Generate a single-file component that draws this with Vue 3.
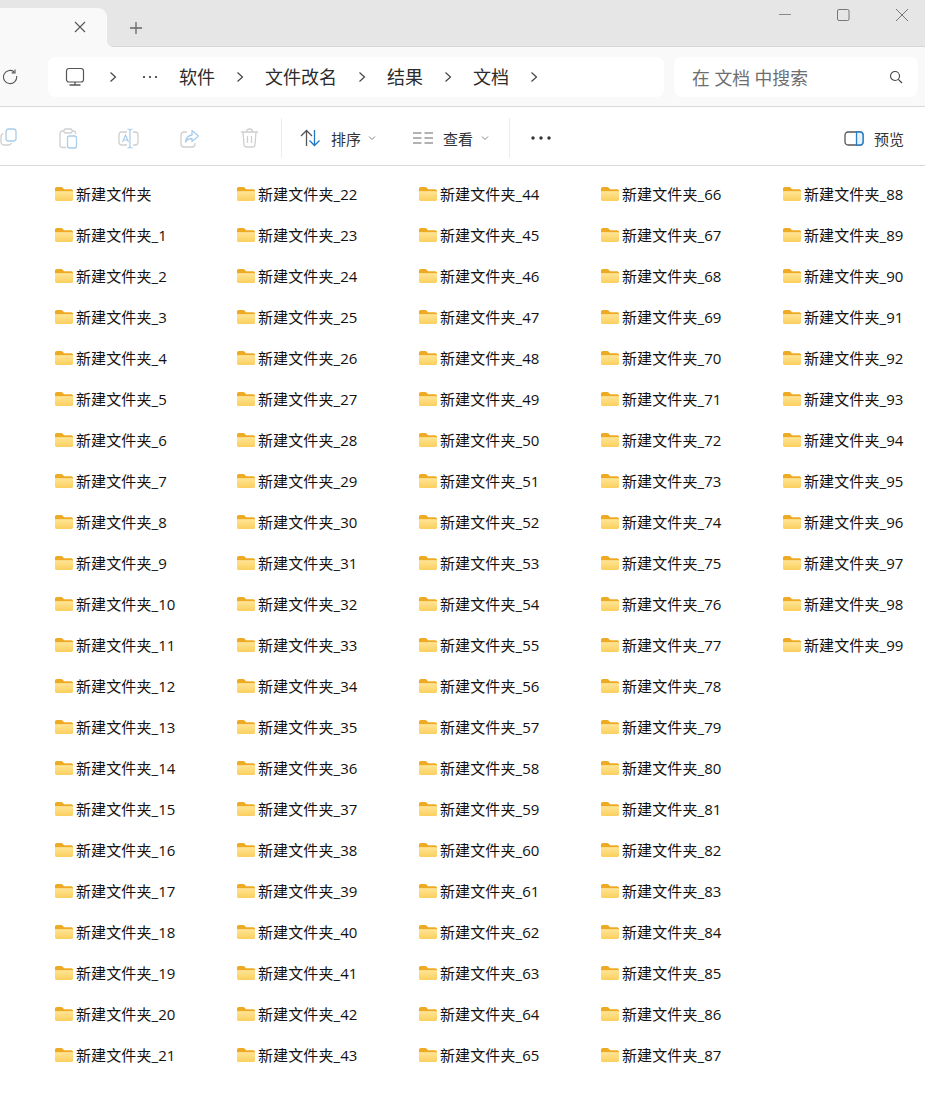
<script setup>
const names = Array.from({ length: 100 }, (_, i) => (i === 0 ? '新建文件夹' : `新建文件夹_${i}`))
const crumbs = ['软件', '文件改名', '结果', '文档']
</script>

<template>
  <div class="window">
    <header class="titlebar">
      <div class="tab">
        <svg class="tab-close" width="14" height="14" viewBox="0 0 14 14"><path d="M2 2l10 10M12 2L2 12" stroke="#555" stroke-width="1.1" fill="none"/></svg>
      </div>
      <svg class="tab-add" width="14" height="14" viewBox="0 0 14 14"><path d="M7 1v12M1 7h12" stroke="#666" stroke-width="1.3" fill="none"/></svg>
      <div class="controls">
        <svg width="14" height="14" viewBox="0 0 14 14"><path d="M0 6.500h12" stroke="#8a8a8a" stroke-width="1" fill="none"/></svg>
        <svg width="14" height="14" viewBox="0 0 14 14"><rect x="0.500" y="1.500" width="11.500" height="11" rx="1.500" stroke="#777" stroke-width="1" fill="none"/></svg>
        <svg width="14" height="14" viewBox="0 0 14 14"><path d="M1 1l12 12M13 1L1 13" stroke="#777" stroke-width="1" fill="none"/></svg>
      </div>
    </header>

    <nav class="navbar">
      <svg class="refresh" width="18" height="18" viewBox="0 0 18 18"><path d="M14.600 7.500A6.600 6.600 0 1 1 12 3.200M13 1v3.400H9.700" stroke="#555" stroke-width="1.100" fill="none" transform="translate(-1 0.500)"/></svg>
      <div class="address">
        <svg class="pc" width="20" height="20" viewBox="0 0 20 20"><rect x="1.500" y="1.500" width="17" height="13.500" rx="2.500" stroke="#555" stroke-width="1.200" fill="none"/><path d="M10 15v2.500M4.500 18h11" stroke="#555" stroke-width="1.300" fill="none"/></svg>
        <svg class="chev" width="8" height="12" viewBox="0 0 8 12"><path d="M1.500 1.500L6.500 6l-5 4.500" stroke="#444" stroke-width="1.200" fill="none"/></svg>
        <svg class="dots" width="16" height="4" viewBox="0 0 16 4"><circle cx="2" cy="2" r="1.100" fill="#333"/><circle cx="8" cy="2" r="1.100" fill="#333"/><circle cx="14" cy="2" r="1.100" fill="#333"/></svg>
        <template v-for="c in crumbs" :key="c">
          <span class="crumb">{{ c }}</span>
          <svg class="chev" width="8" height="12" viewBox="0 0 8 12"><path d="M1.500 1.500L6.500 6l-5 4.500" stroke="#444" stroke-width="1.200" fill="none"/></svg>
        </template>
      </div>
      <div class="search">
        <span class="search-text">在 文档 中搜索</span>
        <svg width="14" height="14" viewBox="0 0 14 14"><circle cx="6" cy="6" r="4.500" stroke="#444" stroke-width="1.100" fill="none"/><path d="M9.300 9.300L13 13" stroke="#444" stroke-width="1.200" fill="none"/></svg>
      </div>
    </nav>

    <section class="toolbar">
      <div class="tool-icons">
        <svg width="18" height="20" viewBox="0 0 18 20"><rect x="6" y="1" width="10" height="12" rx="2.500" stroke="#a9cdea" stroke-width="1.300" fill="none"/><path d="M3.500 5.500C1.800 6 1 7 1 8.500v5C1 16 2.500 17 4.500 17h4c1.500 0 2.500-.8 3-2" stroke="#cfcfcf" stroke-width="1.300" fill="none"/></svg>
        <svg width="19" height="21" viewBox="0 0 19 21"><path d="M5 3H3.500C2 3 1 4 1 5.500V17c0 1.500 1 2.500 2.500 2.500H7M13 3h1.500C16 3 16.500 4 16.500 5v1" stroke="#cfcfcf" stroke-width="1.300" fill="none"/><rect x="5" y="1" width="8" height="4" rx="1.500" stroke="#cfcfcf" stroke-width="1.300" fill="none"/><rect x="8.500" y="8" width="9" height="12" rx="2" stroke="#a9cdea" stroke-width="1.300" fill="none"/></svg>
        <svg width="21" height="21" viewBox="0 0 21 21"><path d="M9 4H4C2 4 1 5 1 7v7c0 2 1 3 3 3h5M15 4h2c2 0 3 1 3 3v7c0 2-1 3-3 3h-2" stroke="#cfcfcf" stroke-width="1.300" fill="none"/><path d="M9.500 1c1.500 0 2.500.5 2.500 1.500v16c0 1-1 1.500-2.500 1.500M14.500 1C13 1 12 1.500 12 2.500M14.500 20c-1.500 0-2.500-.5-2.500-1.500" stroke="#a9cdea" stroke-width="1.200" fill="none"/><path d="M4.500 14L7.500 7l3 7M5.500 12h4" stroke="#a9cdea" stroke-width="1.200" fill="none"/></svg>
        <svg width="20" height="19" viewBox="0 0 20 19"><path d="M7 3H4C2.200 3 1 4.200 1 6v9c0 1.800 1.200 3 3 3h8c1.800 0 3-1.200 3-3v-1" stroke="#cfcfcf" stroke-width="1.300" fill="none"/><path d="M12 1.500l6.500 5.500-6.500 5.500V9.500c-3 0-5 1-6.500 3.500 .5-4 3-6.500 6.500-7z" stroke="#a9cdea" stroke-width="1.300" fill="none" stroke-linejoin="round"/></svg>
        <svg width="19" height="20" viewBox="0 0 19 20"><path d="M1 4h17M6.500 4c0-2 1-3 3-3s3 1 3 3M3 4l1 12.500c.1 1.500 1 2.500 2.500 2.500h6c1.500 0 2.400-1 2.500-2.500L16 4M7.500 8v7M11.500 8v7" stroke="#cfcfcf" stroke-width="1.300" fill="none"/></svg>
      </div>
      <i class="sep first"></i>
      <div class="tool sort">
        <svg width="21" height="18" viewBox="0 0 21 18"><path d="M6.500 17V1.500M1 7l5.500-5.500L12 7" stroke="#555" stroke-width="1.300" fill="none"/><path d="M14.500 1v15.500M9.500 11.500l5 5 5-5" stroke="#1f78c1" stroke-width="1.300" fill="none"/></svg>
        <span>排序</span>
        <svg width="8" height="6" viewBox="0 0 8 6"><path d="M1 1.500l3 3 3-3" stroke="#888" stroke-width="1" fill="none"/></svg>
      </div>
      <div class="tool view">
        <svg width="20" height="12" viewBox="0 0 20 12"><path d="M0 1h8.500M0 6h8.500M0 11h8.500M11.500 1h8.500M11.500 6h8.500M11.500 11h8.500" stroke="#666" stroke-width="1.200" fill="none"/></svg>
        <span>查看</span>
        <svg width="8" height="6" viewBox="0 0 8 6"><path d="M1 1.500l3 3 3-3" stroke="#888" stroke-width="1" fill="none"/></svg>
      </div>
      <i class="sep second"></i>
      <svg class="more" width="20" height="4" viewBox="0 0 20 4"><circle cx="2" cy="2" r="1.700" fill="#333"/><circle cx="10" cy="2" r="1.700" fill="#333"/><circle cx="18" cy="2" r="1.700" fill="#333"/></svg>
      <div class="tool preview">
        <svg width="20" height="15" viewBox="0 0 20 15"><rect x="1" y="1" width="18" height="13" rx="3" stroke="#555" stroke-width="1.300" fill="none"/><path d="M12.500 1h3.500c1.800 0 3 1.200 3 3v7c0 1.800-1.200 3-3 3h-3.500z" stroke="#2a7fc4" stroke-width="1.300" fill="#e6f1fa"/></svg>
        <span>预览</span>
      </div>
    </section>

    <main class="files">
      <div v-for="n in names" :key="n" class="file">
        <svg class="folder" width="18" height="14" viewBox="0 0 19 15" preserveAspectRatio="none">
          <defs>
            <linearGradient id="fg" x1="0" y1="0" x2="0" y2="1"><stop offset="0" stop-color="#ffe596"/><stop offset="1" stop-color="#fbcf5e"/></linearGradient>
          </defs>
          <path d="M0 2C0 .8.800 0 2 0h4.500c.8 0 1.200.3 1.700.8L9.500 2.500H17c1.200 0 2 .8 2 2V5H0z" fill="#eeaa22"/>
          <path d="M0 4.500h17.500c.9 0 1.500.6 1.500 1.500v7c0 1.200-.8 2-2 2H2c-1.200 0-2-.8-2-2z" fill="url(#fg)"/>
        </svg>
        <span>{{ n }}</span>
      </div>
    </main>
  </div>
</template>

<style scoped>
.window {
  width: 925px;
  height: 1101px;
  overflow: hidden;
  background: #fff;
  font-family: "Open Sans", "Noto Sans CJK SC", sans-serif;
  color: #1a1a1a;
}
.titlebar {
  height: 47px;
  background: #e6e6e6;
  border-bottom: 1px solid #d6d6d6;
  display: flex;
  align-items: flex-start;
  box-sizing: border-box;
}
.tab {
  width: 107px;
  height: 39px;
  margin-top: 8px;
  background: #f9f9f9;
  border-top-right-radius: 9px;
  display: flex;
  justify-content: flex-end;
  align-items: center;
  padding-right: 20px;
  box-sizing: border-box;
  position: relative;
  flex: none;
}
.tab::after {
  content: "";
  position: absolute;
  right: -6px;
  bottom: 0;
  width: 6px;
  height: 6px;
  background: radial-gradient(circle at 100% 0, transparent 5.500px, #f9f9f9 6px);
}
.tab-close { margin-top: -2px; }
.tab-add { margin: 21px 0 0 22px; }
.controls {
  margin-left: auto;
  display: flex;
  gap: 44px;
  padding: 8px 16px 0 0;
}
.navbar {
  height: 60px;
  background: #f9f9f9;
  border-bottom: 1px solid #d9d9d9;
  display: flex;
  align-items: center;
  padding: 10px 0 9px;
  box-sizing: border-box;
}
.refresh { margin-left: 3px; flex: none; }
.address {
  margin-left: 27px;
  width: 616px;
  height: 40px;
  background: #fff;
  border-radius: 8px;
  display: flex;
  align-items: center;
  box-sizing: border-box;
  padding-left: 17px;
  font-size: 18px;
  color: #2b2b2b;
  flex: none;
}
.pc { margin-right: 24px; }
.dots { margin: 0 0 0 25px; }
.crumb { margin: 0 21px; line-height: 24px; }
.search {
  margin-left: 10px;
  width: 244px;
  height: 40px;
  background: #fff;
  border-radius: 8px;
  display: flex;
  align-items: center;
  justify-content: space-between;
  box-sizing: border-box;
  padding: 0 15px 0 18px;
  flex: none;
}
.search-text { font-size: 17.800px; color: #6e6e6e; }
.toolbar {
  height: 59px;
  border-bottom: 1px solid #d9d9d9;
  display: flex;
  align-items: center;
  box-sizing: border-box;
  padding-top: 4px;
  font-size: 15px;
  color: #333;
}
.tool-icons {
  display: flex;
  align-items: center;
  width: 259px;
  gap: 40.500px;
  flex: none;
}
.sep { width: 1px; height: 40px; background: #ececec; flex: none; }
.sep.first { margin-left: 22px; }
.tool { display: flex; align-items: center; }
.sort { margin-left: 18px; }
.sort span { margin-right: 7px; margin-left: 10px; }
.view { margin-left: 37px; }
.view span { margin-right: 8px; margin-left: 10px; }
.sep.second { margin-left: 20px; }
.more { margin-left: 21px; }
.preview { margin-left: auto; padding-right: 21px; }
.preview span { margin-left: 10px; }
.files {
  display: grid;
  grid-auto-flow: column;
  grid-template-rows: repeat(22, 41px);
  grid-auto-columns: 182px;
  padding: 7px 0 0 55px;
}
.file {
  display: flex;
  align-items: center;
  font-size: 15px;
  letter-spacing: 0.100px;
  line-height: 24px;
  white-space: nowrap;
  color: #111;
}
.folder { margin-right: 3px; flex: none; margin-top: 1px; }
</style>
